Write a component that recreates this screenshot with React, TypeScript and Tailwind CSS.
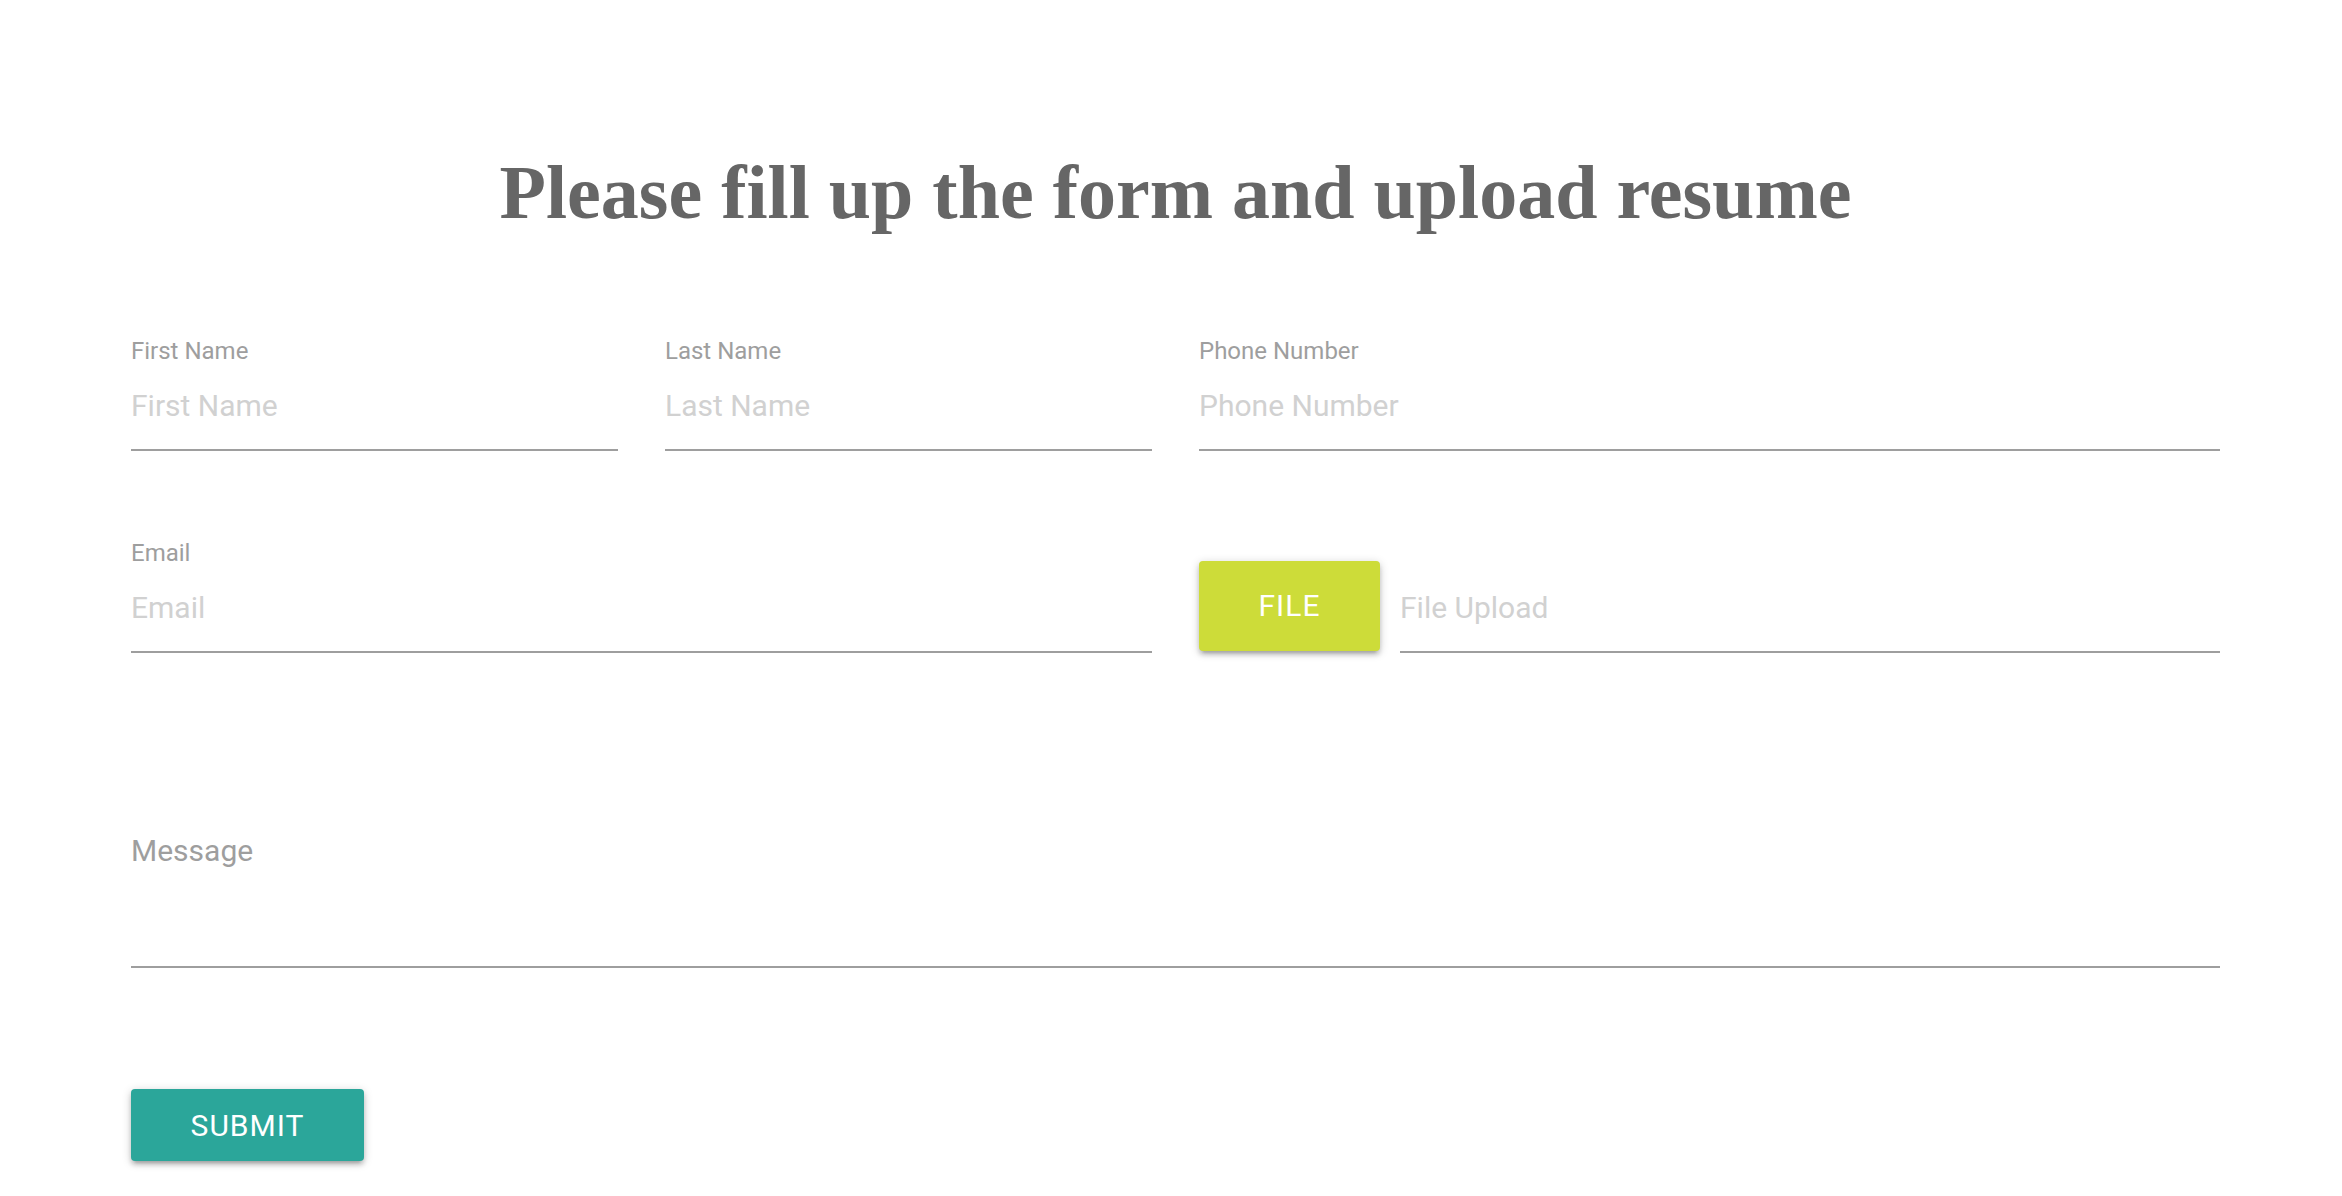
import React from 'react'

function Field({ label, className = '' }: { label: string; className?: string }) {
  return (
    <div className={`flex flex-col ${className}`}>
      <label className="h-[24px] text-[24px] leading-[24px] text-[#9e9e9e]">{label}</label>
      <input
        type="text"
        placeholder={label}
        className="h-[88px] w-full border-b-2 border-[#9e9e9e] bg-transparent pb-[2px] text-[30px] text-[#444] outline-none placeholder:text-[#d1d1d1]"
      />
    </div>
  )
}

export default function App() {
  return (
    <div className="min-h-screen bg-white font-['Roboto','Liberation_Sans',sans-serif]">
      <div className="ml-[131px] w-[2089px] pt-[149px]">
        <h2 className="text-center font-['Liberation_Serif','Times_New_Roman',serif] text-[76px] font-bold leading-[86px] text-[#666]">
          Please fill up the form and upload resume
        </h2>

        <form className="mt-[104px]" onSubmit={(e) => e.preventDefault()}>
          {/* row 1 */}
          <div className="grid grid-cols-4 gap-x-[47px]">
            <Field label="First Name" />
            <Field label="Last Name" />
            <Field label="Phone Number" className="col-span-2" />
          </div>

          {/* row 2 */}
          <div className="mt-[90px] grid grid-cols-4 gap-x-[47px]">
            <Field label="Email" className="col-span-2" />
            <div className="col-span-2 flex items-start pt-[20px]">
              <button
                type="button"
                className="h-[90px] w-[181px] shrink-0 rounded-[4px] bg-[#cddc39] pb-[2px] text-[30px] tracking-[1px] text-white shadow-[0_4px_4px_0_rgba(0,0,0,0.14),0_6px_2px_-4px_rgba(0,0,0,0.12),0_2px_10px_0_rgba(0,0,0,0.2)]"
              >
                FILE
              </button>
              <input
                type="text"
                placeholder="File Upload"
                className="ml-[20px] mt-[4px] h-[88px] w-full border-b-2 border-[#9e9e9e] bg-transparent pb-[2px] text-[30px] text-[#444] outline-none placeholder:text-[#d1d1d1]"
              />
            </div>
          </div>

          {/* message */}
          <div className="mt-[183px] flex h-[132px] flex-col border-b-2 border-[#9e9e9e]">
            <label className="text-[30px] leading-[30px] text-[#9e9e9e]">Message</label>
            <textarea className="w-full flex-1 resize-none bg-transparent text-[30px] outline-none" />
          </div>

          <button
            type="submit"
            className="mt-[121px] h-[72px] w-[233px] rounded-[4px] bg-[#2ba69a] text-[30px] tracking-[1px] text-white shadow-[0_4px_4px_0_rgba(0,0,0,0.14),0_6px_2px_-4px_rgba(0,0,0,0.12),0_2px_10px_0_rgba(0,0,0,0.2)]"
          >
            SUBMIT
          </button>
        </form>
      </div>
    </div>
  )
}
